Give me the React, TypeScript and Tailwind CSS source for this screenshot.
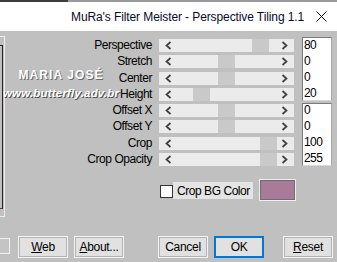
import React from 'react';

interface Row {
	label: string;
	thumb: number;
}

const rows: Row[] = [
	{ label: 'Perspective', thumb: 93 },
	{ label: 'Stretch', thumb: 59 },
	{ label: 'Center', thumb: 59 },
	{ label: 'Height', thumb: 34 },
	{ label: 'Offset X', thumb: 59 },
	{ label: 'Offset Y', thumb: 59 },
	{ label: 'Crop', thumb: 101 },
	{ label: 'Crop Opacity', thumb: 101 },
];

const Chevron = ({ dir }: { dir: 'left' | 'right' }) => (
	<svg width="7" height="9" viewBox="0 0 7 9" className="shrink-0">
		<polyline
			points={dir === 'left' ? '5.5,1 1.5,4.5 5.5,8' : '1.5,1 5.5,4.5 1.5,8'}
			fill="none"
			stroke="#404040"
			strokeWidth="1.7"
		/>
	</svg>
);

const Slider = ({ thumb }: { thumb: number }) => (
	<div className="relative h-[13px] w-[135px] bg-[#ebebeb] flex items-center justify-between px-[6px]">
		<Chevron dir="left" />
		<div className="absolute top-0 h-[13px] w-[17px] bg-[#c9c9c9]" style={{ left: thumb }} />
		<Chevron dir="right" />
	</div>
);

const ValueBox = ({ values, box, inner }: { values: string[]; box: string; inner: string }) => (
	<div className={`w-[30px] bg-white border border-[#7a7a7a] border-r-[#a8a8a8] border-b-[#d8d8d8] pl-px overflow-hidden ${box}`}>
		<div className={inner}>
			{values.map((v, i) => (
				<div key={i} className="h-[16.3px] leading-[16.3px] text-[12px] text-black tracking-[-0.6px]">
					{v}
				</div>
			))}
		</div>
	</div>
);

const WinButton = ({ children, focused }: { children: React.ReactNode; focused?: boolean }) => (
	<div
		className={`h-[22px] w-[50px] flex items-center justify-center text-[12px] text-black tracking-[-0.3px] bg-[#e1e1e1] ${
			focused ? 'border-2 border-[#0078d7]' : 'border border-[#f4f4f4] outline outline-1 -outline-offset-2 outline-[#b4b4b4]'
		}`}
	>
		{children}
	</div>
);

export default function App() {
	return (
		<div className="relative w-[337px] h-[262px] overflow-hidden bg-[#c0c0c0] font-['Liberation_Sans',Arial,sans-serif]">
			{/* window behind */}
			<div className="flex h-[2px]">
				<div className="w-[68px] bg-[#3c3c3c]" />
				<div className="flex-1 bg-[#9a9a9a]" />
			</div>

			{/* title bar */}
			<div className="h-[29px] bg-white flex items-center">
				<span className="pl-[71px] text-[12px] text-[#0a0a2a] tracking-[-0.1px]">
					MuRa's Filter Meister - Perspective Tiling 1.1
				</span>
				<svg width="11" height="11" viewBox="0 0 11 11" className="ml-auto mr-[10px]">
					<path d="M0.5 0.5 L10.5 10.5 M10.5 0.5 L0.5 10.5" stroke="#111" strokeWidth="1" />
				</svg>
			</div>

			{/* body */}
			<div className="flex pt-[5px]">
				{/* preview, clipped at left */}
				<div className="w-[5px] h-[181px] border-t border-b border-r border-[#ececec] shrink-0 pt-[8px] pb-[7px]">
					<div className="h-full w-[3px] border-t border-b border-r border-[#2a2224] border-b-[#6a3a44]" />
				</div>

				<div className="flex flex-col">
					<div className="flex pt-[1px]">
						{/* labels */}
						<div className="w-[147px] flex flex-col gap-[3.3px] pt-[2px]">
							{rows.map((r) => (
								<div key={r.label} className="h-[13px] leading-[13px] text-right text-[12px] text-black tracking-[-0.45px]">
									{r.label}
								</div>
							))}
						</div>
						{/* sliders */}
						<div className="ml-[7px] flex flex-col gap-[3.3px] pt-[2px]">
							{rows.map((r) => (
								<Slider key={r.label} thumb={r.thumb} />
							))}
						</div>
						{/* values */}
						<div className="ml-[8px] flex flex-col gap-[2px]">
							<ValueBox values={['80', '0', '0', '20']} box="h-[64px]" inner="-mt-[1.5px]" />
							<ValueBox values={['0', '0', '100', '255']} box="h-[63px]" inner="-mt-[2.5px]" />
						</div>
					</div>

					{/* crop bg colour */}
					<div className="flex items-start mt-[14px] ml-[155px]">
						<div className="mt-[5px] w-[13px] h-[13px] bg-white border border-[#333]" />
						<div className="mt-[2px] h-[17px] w-[80px] bg-[#e4e4e4] flex items-center pl-[4px] text-[12px] text-black tracking-[-0.45px]">
							Crop BG Color
						</div>
						<div className="ml-[7px] w-[35px] h-[20px] bg-[#a97b98] border border-[#6e6e6e] outline outline-1 outline-[#eeeeee]" />
					</div>
				</div>
			</div>

			{/* buttons */}
			<div className="flex items-end mt-[19px]">
				<div className="w-[10px] h-[16px] border border-[#f0f0f0] border-l-0 bg-[#c4c4c4] mb-[4px]" />
				<div className="ml-[8px]">
					<WinButton>
						<span>
							<span className="underline">W</span>eb
						</span>
					</WinButton>
				</div>
				<div className="ml-[6px]">
					<WinButton>
						<span>
							<span className="underline">A</span>bout...
						</span>
					</WinButton>
				</div>
				<div className="ml-[34px]">
					<WinButton>Cancel</WinButton>
				</div>
				<div className="ml-[6px]">
					<WinButton focused>OK</WinButton>
				</div>
				<div className="ml-[19px]">
					<WinButton>
						<span>
							<span className="underline">R</span>eset
						</span>
					</WinButton>
				</div>
			</div>

			{/* watermark */}
			<div className="absolute left-[2px] top-[66px] flex flex-col items-center w-[118px] font-bold text-white">
				<div className="text-[12px] tracking-[1.1px] [text-shadow:1px_1px_0_#6a6a6a]">MARIA JOSÉ</div>
				<div className="italic text-[11.5px] leading-[13px] mt-[3px] tracking-[0.2px] [text-shadow:1px_1px_0_#505050]">
					www.butterfly.adv.br
				</div>
			</div>
		</div>
	);
}
